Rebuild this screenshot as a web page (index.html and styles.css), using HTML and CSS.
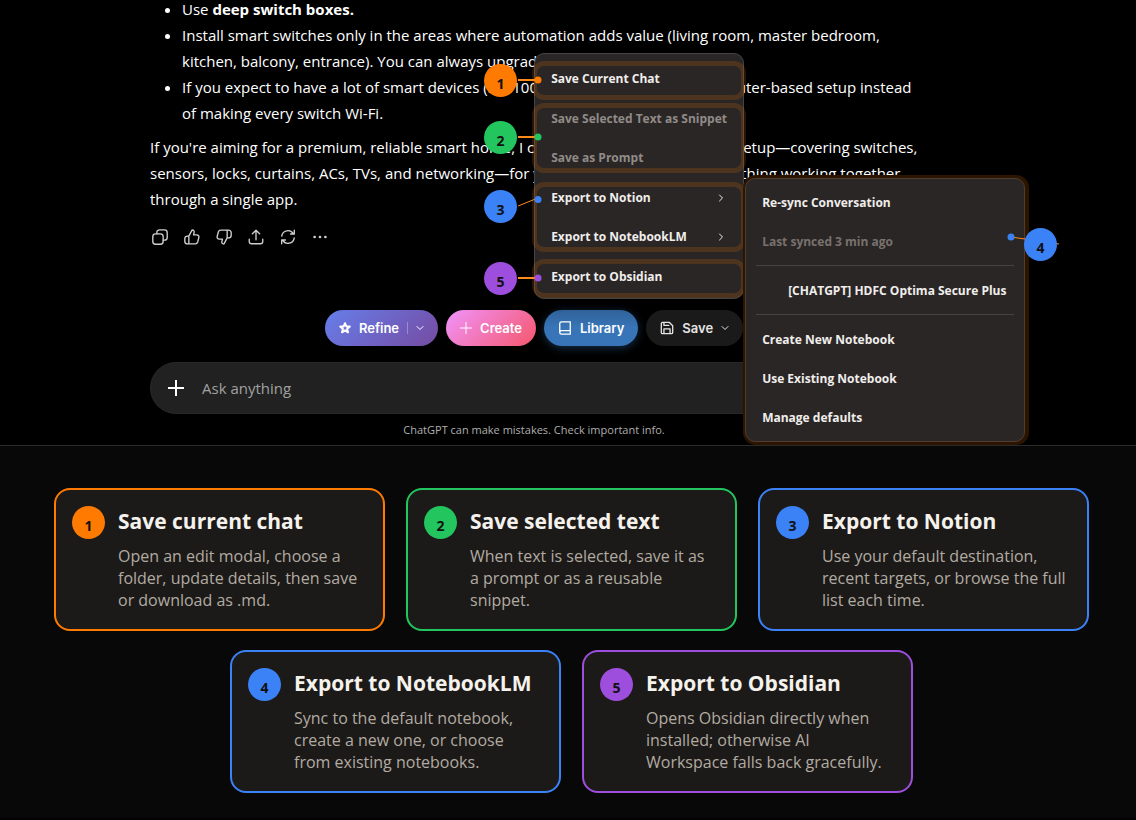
FILE: index.html
```html
<!DOCTYPE html>
<html lang="en">
<head>
    <meta charset="UTF-8">
    <meta name="viewport" content="width=device-width, initial-scale=1.0">
    <title>Save and export menu</title>
    <link rel="stylesheet" href="styles.css">
</head>
<body>

<section class="chat">
    <div class="column">
        <ul class="answer-list">
            <li>Use <strong>deep switch boxes.</strong></li>
            <li>Install smart switches only in the areas where automation adds value (living room, master bedroom,<br>kitchen, balcony, entrance). You can always upgrade later.</li>
            <li>If you expect to have a lot of smart devices (50–100+), then consider a hub or router-based setup instead<br>of making every switch Wi-Fi.</li>
        </ul>
        <p class="answer-text">If you're aiming for a premium, reliable smart home, I can help design the complete setup—covering switches,<br>sensors, locks, curtains, ACs, TVs, and networking—for you, so that you can get everything working together<br>through a single app.</p>

        <div class="actions">
            <button type="button" aria-label="Copy">
                <svg viewBox="0 0 20 20"><rect x="2" y="6.500" width="11.500" height="11.500" rx="3"/><path d="M6.500 6.500V5a3 3 0 0 1 3-3H15a3 3 0 0 1 3 3v5.500a3 3 0 0 1-3 3h-1.500"/></svg>
            </button>
            <button type="button" aria-label="Good response">
                <svg viewBox="0 0 20 20"><path d="M6.500 9 10 2.300c1.600-.3 2.800 1 2.400 2.600L11.700 7.700h3.600c1.700 0 2.700 1.400 2.300 2.900l-1.300 5c-.4 1.400-1.300 2.100-2.700 2.100H5a3 3 0 0 1-3-3V12a3 3 0 0 1 3-3h1.500v8.500"/></svg>
            </button>
            <button type="button" aria-label="Bad response">
                <svg viewBox="0 0 20 20"><path d="M13.500 11 10 17.700c-1.600.3-2.800-1-2.400-2.600l.7-2.800H4.700c-1.700 0-2.700-1.400-2.300-2.900l1.300-5C4.100 3 5 2.300 6.400 2.300H15a3 3 0 0 1 3 3V8a3 3 0 0 1-3 3h-1.500V2.500"/></svg>
            </button>
            <button type="button" aria-label="Share">
                <svg viewBox="0 0 20 20"><path d="M10 13V3M6 6.500l4-4 4 4M2.500 12.500V15a2.500 2.500 0 0 0 2.500 2.500h10a2.500 2.500 0 0 0 2.500-2.500v-2.500"/></svg>
            </button>
            <button type="button" aria-label="Try again">
                <svg viewBox="0 0 20 20"><path d="M3 9a7 7 0 0 1 13-2.500M17 2.500v4.200h-4.200M17 11a7 7 0 0 1-13 2.500M3 17.500v-4.200h4.200"/></svg>
            </button>
            <button type="button" aria-label="More">
                <svg class="dots" viewBox="0 0 20 20"><circle cx="4" cy="10" r="1.500"/><circle cx="10" cy="10" r="1.500"/><circle cx="16" cy="10" r="1.500"/></svg>
            </button>
        </div>

        <div class="toolbar">
            <button type="button" class="pill refine">
                <svg class="icon-star" viewBox="0 0 12 12"><path d="M6 1.200 7.300 4.400l3.500.2L8.100 6.900 9 10.300 6 8.400l-3 1.900.9-3.400L1.200 4.600l3.500-.2z"/></svg>
                Refine
                <span class="split"></span>
                <svg class="icon-chevron" viewBox="0 0 8 8"><path d="M1 2.500 4 5.500 7 2.500"/></svg>
            </button>
            <button type="button" class="pill create">
                <svg class="icon-plus" viewBox="0 0 12 12"><path d="M6 .500v11M.500 6h11"/></svg>
                Create
            </button>
            <button type="button" class="pill library">
                <svg class="icon-book" viewBox="0 0 16 16"><path d="M2 13V3a2 2 0 0 1 2-2h10v14H4a2 2 0 0 1 0-4h10"/></svg>
                Library
            </button>
            <div class="save-wrap">
                <button type="button" class="pill save">
                    <svg class="icon-disk" viewBox="0 0 16 16"><path d="M3 1.500h7.500l4 4V13a1.500 1.500 0 0 1-1.500 1.500H3A1.500 1.500 0 0 1 1.500 13V3A1.500 1.500 0 0 1 3 1.500zM4.500 14.500V9h7v5.500M4.500 1.500V5H10"/></svg>
                    Save
                    <svg class="icon-chevron" viewBox="0 0 8 8"><path d="M1 2.500 4 5.500 7 2.500"/></svg>
                </button>

                <div class="menu">
                    <div class="group">
                        <button type="button" class="item">Save Current Chat</button>
                        <svg class="callout orange" viewBox="0 0 60 40"><path d="M34 20h20"/><circle cx="54" cy="20" r="3.500"/></svg>
                        <span class="badge orange pin">1</span>
                    </div>
                    <div class="group double">
                        <button type="button" class="item" disabled>Save Selected Text as Snippet</button>
                        <button type="button" class="item" disabled>Save as Prompt</button>
                        <svg class="callout green" viewBox="0 0 60 40"><path d="M34 20h20"/><circle cx="54" cy="20" r="3.500"/></svg>
                        <span class="badge green pin">2</span>
                    </div>
                    <div class="group double export">
                        <button type="button" class="item">Export to Notion
                            <svg class="icon-chevron" viewBox="0 0 8 8"><path d="M2.500 1 5.500 4 2.500 7"/></svg>
                        </button>
                        <button type="button" class="item">Export to NotebookLM
                            <svg class="icon-chevron" viewBox="0 0 8 8"><path d="M2.500 1 5.500 4 2.500 7"/></svg>
                        </button>
                        <svg class="callout blue" viewBox="0 0 60 40"><path class="thin" d="M34 10 54 2"/><circle cx="54" cy="3.500" r="3.500"/></svg>
                        <span class="badge blue pin">3</span>
                    </div>
                    <div class="group">
                        <button type="button" class="item">Export to Obsidian</button>
                        <svg class="callout purple" viewBox="0 0 60 40"><path d="M34 20h20"/><circle cx="54" cy="20" r="3.500"/></svg>
                        <span class="badge purple pin">5</span>
                    </div>

                    <div class="submenu">
                        <button type="button" class="item">Re-sync Conversation</button>
                        <button type="button" class="item muted" disabled>Last synced 3 min ago</button>
                        <hr>
                        <button type="button" class="item indent">[CHATGPT] HDFC Optima Secure Plus</button>
                        <hr>
                        <button type="button" class="item">Create New Notebook</button>
                        <button type="button" class="item">Use Existing Notebook</button>
                        <button type="button" class="item">Manage defaults</button>
                        <svg class="callout side blue" viewBox="0 0 60 40"><path class="thin" d="M6 13 54 20"/><circle cx="6" cy="13" r="3.500"/></svg>
                        <span class="badge blue pin side">4</span>
                    </div>
                </div>
            </div>
        </div>

        <div class="composer">
            <button type="button" aria-label="Add files">
                <svg viewBox="0 0 16 16"><path d="M8 .500v15M.500 8h15"/></svg>
            </button>
            <input type="text" placeholder="Ask anything" aria-label="Ask anything">
        </div>
        <p class="disclaimer">ChatGPT can make mistakes. Check important info.</p>
    </div>
</section>

<section class="legend">
    <article class="card orange">
        <span class="badge orange">1</span>
        <div>
            <h2>Save current chat</h2>
            <p>Open an edit modal, choose a<br>folder, update details, then save<br>or download as .md.</p>
        </div>
    </article>
    <article class="card green">
        <span class="badge green">2</span>
        <div>
            <h2>Save selected text</h2>
            <p>When text is selected, save it as<br>a prompt or as a reusable<br>snippet.</p>
        </div>
    </article>
    <article class="card blue">
        <span class="badge blue">3</span>
        <div>
            <h2>Export to Notion</h2>
            <p>Use your default destination,<br>recent targets, or browse the full<br>list each time.</p>
        </div>
    </article>
    <article class="card blue">
        <span class="badge blue">4</span>
        <div>
            <h2>Export to NotebookLM</h2>
            <p>Sync to the default notebook,<br>create a new one, or choose<br>from existing notebooks.</p>
        </div>
    </article>
    <article class="card purple">
        <span class="badge purple">5</span>
        <div>
            <h2>Export to Obsidian</h2>
            <p>Opens Obsidian directly when<br>installed; otherwise AI<br>Workspace falls back gracefully.</p>
        </div>
    </article>
</section>

</body>
</html>
```
FILE: styles.css
```css
* {
    box-sizing: border-box;
}

body {
    margin: 0;
    background-color: #000;
    color: #fff;
    font-family: "Open Sans", "Noto Sans", sans-serif;
}

button {
    border: none;
    padding: 0;
    background: none;
    color: inherit;
    font-family: inherit;
    cursor: pointer;
}

svg {
    display: block;
    flex: none;
    fill: none;
    stroke: currentColor;
    stroke-linecap: round;
    stroke-linejoin: round;
}

/* accent colors */
.orange {
    --accent: #ff7a00;
}

.green {
    --accent: #22c55e;
}

.blue {
    --accent: #3b82f6;
}

.purple {
    --accent: #9d4edd;
}

/* chat */
.chat {
    padding-right: 68px;
    border-bottom: 1px solid #2a2a2a;
}

.column {
    max-width: 768px;
    margin: 0 auto;
}

.answer-list,
.answer-text {
    font-size: 15px;
    line-height: 26px;
    white-space: nowrap;
}

.answer-list {
    margin: 0;
    padding-left: 32px;
    margin-top: -4px;
}

.answer-text {
    margin: 8px 0 9px;
}

.actions {
    display: flex;
    margin-left: -6px;
    color: #cfcfcf;
}

.actions button {
    display: flex;
    align-items: center;
    justify-content: center;
    width: 32px;
    height: 32px;
}

.actions svg {
    width: 18px;
    height: 18px;
    stroke-width: 1.5;
}

.actions .dots {
    fill: currentColor;
    stroke: none;
}

/* toolbar */
.toolbar {
    display: flex;
    justify-content: center;
    gap: 8px;
    margin-top: 57px;
}

.pill {
    display: flex;
    align-items: center;
    gap: 8px;
    height: 36px;
    padding: 0 14px;
    border-radius: 18px;
    font-size: 13px;
    font-weight: 600;
    font-family: Inter, sans-serif;
}

.refine {
    background: linear-gradient(135deg, #667eea, #764ba2);
}

.create {
    background: linear-gradient(135deg, #f093fb, #f5576c);
}

.library {
    background: linear-gradient(#2f6299, #3875b8 50%);
    box-shadow: 0 2px 8px rgba(56, 117, 184, 0.4);
}

.save {
    background-color: #1a1a1a;
    color: #e5e5e5;
}

.split {
    width: 1px;
    height: 12px;
    background-color: rgba(255, 255, 255, 0.3);
}

.icon-star,
.icon-plus {
    width: 12px;
    height: 12px;
}

.icon-star {
    stroke-width: 2;
}

.icon-book,
.icon-disk {
    width: 14px;
    height: 16px;
    stroke-width: 1.5;
}

.icon-chevron {
    width: 8px;
    height: 8px;
}

.save-wrap {
    position: relative;
}

/* menus */
.menu,
.submenu {
    position: absolute;
    background-color: #2a2625;
    color: #f0eeec;
}

.menu {
    right: -1px;
    bottom: 47px;
    width: 210px;
    padding: 5px 5px 2px;
    border: 1px solid #444;
    border-radius: 10px;
}

.submenu {
    left: 210px;
    top: 124px;
    width: 280px;
    padding: 4px 10px;
    border: 1px solid #503c30;
    border-radius: 10px;
    box-shadow: 1px 0 0 3px #2b1500;
}

.group {
    position: relative;
}

.group + .group {
    margin-top: 1px;
}

.group::after {
    content: "";
    position: absolute;
    inset: 2px -8px -2px;
    border: 5px solid rgba(255, 122, 0, 0.17);
    border-radius: 12px;
    pointer-events: none;
}

.group.double::after {
    inset: 4px -8px;
}

.item {
    display: flex;
    align-items: center;
    justify-content: space-between;
    width: 100%;
    height: 39px;
    padding: 0 13px 0 11px;
    font-size: 12px;
    font-weight: 700;
    white-space: nowrap;
}

.submenu .item {
    padding: 0 6px;
}

.submenu .indent {
    padding-left: 32px;
}

.item:disabled {
    color: #918b88;
}

.muted:disabled {
    color: #78716e;
}

.submenu hr {
    height: 1px;
    margin: 4px 0 5px;
    border: none;
    background-color: #444;
}

/* numbered badges */
.badge {
    flex: none;
    width: 33px;
    height: 33px;
    padding-top: 10px;
    border-radius: 50%;
    background-color: var(--accent);
    color: #111;
    font-size: 14px;
    font-weight: 700;
    line-height: 20px;
    text-align: center;
}

.pin {
    position: absolute;
    z-index: 1;
    left: -56px;
    top: 5px;
}

.double .pin {
    top: 22px;
}

.export .pin {
    top: 12px;
}

.callout {
    position: absolute;
    z-index: 1;
    left: -56px;
    top: 1px;
    width: 60px;
    height: 40px;
    stroke: #ff8c1a;
    stroke-width: 2;
    stroke-linecap: butt;
    pointer-events: none;
}

.double .callout {
    top: 18px;
}

.callout .thin {
    stroke-width: 1;
}

.callout circle {
    fill: var(--accent);
    stroke: none;
}

.pin.side {
    left: 278px;
    top: 49px;
}

.callout.side {
    left: 259px;
    top: 45px;
}

/* composer */
.composer {
    display: flex;
    align-items: center;
    gap: 18px;
    height: 52px;
    margin-top: 16px;
    padding: 0 17px;
    border: 1px solid #292929;
    border-radius: 26px;
    background-color: #212121;
}

.composer svg {
    width: 16px;
    height: 16px;
    stroke-width: 2;
}

.composer input {
    flex: 1;
    min-width: 0;
    padding: 0;
    border: none;
    outline: none;
    background: none;
    color: #fff;
    font-family: inherit;
    font-size: 15px;
}

.composer input::placeholder {
    color: #a0a0a0;
}

.disclaimer {
    margin: 0;
    color: #afafaf;
    font-size: 11px;
    line-height: 31px;
    text-align: center;
}

/* legend cards */
.legend {
    display: flex;
    flex-wrap: wrap;
    justify-content: center;
    gap: 19px 21px;
    padding: 42px 40px 25px 47px;
    background-color: #080808;
}

.card {
    display: flex;
    gap: 13px;
    flex: 0 1 331px;
    padding: 16px;
    border: 2px solid var(--accent);
    border-radius: 16px;
    background-color: #1c1a18;
}

.card h2 {
    margin: 0;
    color: #f5f2ed;
    font-size: 21px;
    line-height: 30px;
    white-space: nowrap;
}

.card p {
    margin: 9px 0 2px;
    color: #b2aba2;
    font-size: 16px;
    line-height: 22px;
    white-space: nowrap;
}
```
